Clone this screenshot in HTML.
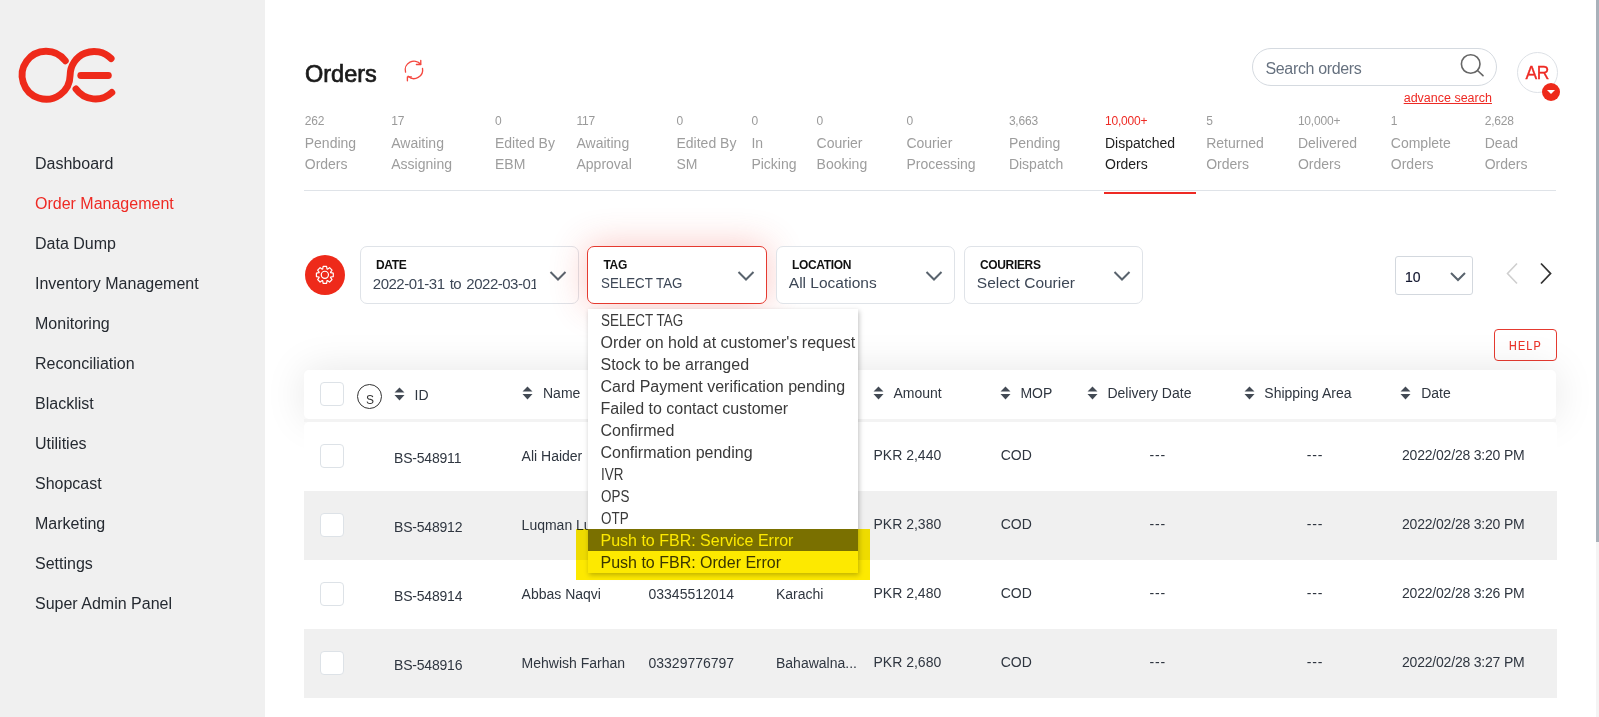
<!DOCTYPE html><html><head><meta charset="utf-8"><style>
html,body{margin:0;padding:0;width:1599px;height:717px;overflow:hidden;background:#fff;font-family:"Liberation Sans",sans-serif;}
.t{position:absolute;line-height:1;white-space:nowrap;}
.a{position:absolute;}
</style></head><body>
<div class="a" style="left:0;top:0;width:265px;height:717px;background:#f0f0f0"></div>
<svg class="a" style="left:0;top:0" width="140" height="120" viewBox="0 0 140 120">
<g fill="none" stroke="#ee2a1a" stroke-width="6.9" stroke-linecap="round">
<path d="M65.3 60.8 A24 24 0 1 0 70.1 75.5 A24 24 0 0 1 111.1 58.5"/>
<path d="M76 89 A24 24 0 0 0 111.8 92.5"/>
<path d="M80.8 75.5 H108.3"/>
</g></svg>
<div class="t " style="left:35px;top:156.46px;font-size:16px;color:#252a31;">Dashboard</div>
<div class="t " style="left:35px;top:196.46px;font-size:16px;color:#ee2a24;">Order Management</div>
<div class="t " style="left:35px;top:236.46px;font-size:16px;color:#252a31;">Data Dump</div>
<div class="t " style="left:35px;top:276.46px;font-size:16px;color:#252a31;">Inventory Management</div>
<div class="t " style="left:35px;top:316.46px;font-size:16px;color:#252a31;">Monitoring</div>
<div class="t " style="left:35px;top:356.46px;font-size:16px;color:#252a31;">Reconciliation</div>
<div class="t " style="left:35px;top:396.46px;font-size:16px;color:#252a31;">Blacklist</div>
<div class="t " style="left:35px;top:436.46px;font-size:16px;color:#252a31;">Utilities</div>
<div class="t " style="left:35px;top:476.46px;font-size:16px;color:#252a31;">Shopcast</div>
<div class="t " style="left:35px;top:516.46px;font-size:16px;color:#252a31;">Marketing</div>
<div class="t " style="left:35px;top:556.46px;font-size:16px;color:#252a31;">Settings</div>
<div class="t " style="left:35px;top:596.46px;font-size:16px;color:#252a31;">Super Admin Panel</div>
<div class="t " style="left:305px;top:63.11px;font-size:23.5px;color:#1a1a1a;-webkit-text-stroke:0.7px #1a1a1a;">Orders</div>
<svg class="a" style="left:398px;top:54px" width="32" height="32" viewBox="0 0 32 32">
<g fill="none" stroke="#f4473f" stroke-width="1.35" stroke-linecap="round" stroke-linejoin="round">
<path d="M7.55 18.1 A8.7 8.7 0 0 1 22.61 10.26"/><path d="M22.77 6.4 V10.49 H18.4"/>
<path d="M24.52 14.34 A8.7 8.7 0 0 1 10.13 22.32"/><path d="M9.4 26.7 V22.9 H13.4"/>
</g></svg>
<div class="a" style="left:1252px;top:48px;width:243px;height:36px;border:1px solid #d5dae0;border-radius:19px;"></div>
<div class="t " style="left:1265.5px;top:61.46px;font-size:16px;color:#66717f;letter-spacing:-0.35px;">Search orders</div>
<svg class="a" style="left:1458px;top:52px" width="28" height="27" viewBox="0 0 28 27">
<g fill="none" stroke="#666" stroke-width="1.6" stroke-linecap="round"><circle cx="12.7" cy="12" r="9.3"/><path d="M19.5 18.5 L25 23.6"/></g></svg>
<div class="t " style="left:1403.7px;top:92.12px;font-size:12.5px;color:#ee2a24;text-decoration:underline;">advance search</div>
<div class="a" style="left:1517px;top:52px;width:39px;height:39px;border:1px solid #dde1e6;border-radius:50%;"></div>
<div class="t " style="left:1525.5px;top:65.19px;font-size:17.5px;color:#ee2a24;letter-spacing:-0.3px;-webkit-text-stroke:0.3px #ee2a24;">AR</div>
<div class="a" style="left:1542px;top:83px;width:18px;height:18px;background:#ee2a1a;border-radius:50%;"></div>
<div class="a" style="left:1547px;top:90px;width:0;height:0;border-left:4px solid transparent;border-right:4px solid transparent;border-top:4px solid #fff;"></div>
<div class="t " style="left:304.75px;top:115.34px;font-size:12px;color:#9a9a9a;letter-spacing:-0.2px;">262</div>
<div class="t " style="left:304.75px;top:135.75px;font-size:14px;color:#9d9d9d;">Pending</div>
<div class="t " style="left:304.75px;top:156.85px;font-size:14px;color:#9d9d9d;">Orders</div>
<div class="t " style="left:391.25px;top:115.34px;font-size:12px;color:#9a9a9a;letter-spacing:-0.2px;">17</div>
<div class="t " style="left:391.25px;top:135.75px;font-size:14px;color:#9d9d9d;">Awaiting</div>
<div class="t " style="left:391.25px;top:156.85px;font-size:14px;color:#9d9d9d;">Assigning</div>
<div class="t " style="left:495px;top:115.34px;font-size:12px;color:#9a9a9a;letter-spacing:-0.2px;">0</div>
<div class="t " style="left:495px;top:135.75px;font-size:14px;color:#9d9d9d;">Edited By</div>
<div class="t " style="left:495px;top:156.85px;font-size:14px;color:#9d9d9d;">EBM</div>
<div class="t " style="left:576.5px;top:115.34px;font-size:12px;color:#9a9a9a;letter-spacing:-0.2px;">117</div>
<div class="t " style="left:576.5px;top:135.75px;font-size:14px;color:#9d9d9d;">Awaiting</div>
<div class="t " style="left:576.5px;top:156.85px;font-size:14px;color:#9d9d9d;">Approval</div>
<div class="t " style="left:676.5px;top:115.34px;font-size:12px;color:#9a9a9a;letter-spacing:-0.2px;">0</div>
<div class="t " style="left:676.5px;top:135.75px;font-size:14px;color:#9d9d9d;">Edited By</div>
<div class="t " style="left:676.5px;top:156.85px;font-size:14px;color:#9d9d9d;">SM</div>
<div class="t " style="left:751.4px;top:115.34px;font-size:12px;color:#9a9a9a;letter-spacing:-0.2px;">0</div>
<div class="t " style="left:751.4px;top:135.75px;font-size:14px;color:#9d9d9d;">In</div>
<div class="t " style="left:751.4px;top:156.85px;font-size:14px;color:#9d9d9d;">Picking</div>
<div class="t " style="left:816.6px;top:115.34px;font-size:12px;color:#9a9a9a;letter-spacing:-0.2px;">0</div>
<div class="t " style="left:816.6px;top:135.75px;font-size:14px;color:#9d9d9d;">Courier</div>
<div class="t " style="left:816.6px;top:156.85px;font-size:14px;color:#9d9d9d;">Booking</div>
<div class="t " style="left:906.4px;top:115.34px;font-size:12px;color:#9a9a9a;letter-spacing:-0.2px;">0</div>
<div class="t " style="left:906.4px;top:135.75px;font-size:14px;color:#9d9d9d;">Courier</div>
<div class="t " style="left:906.4px;top:156.85px;font-size:14px;color:#9d9d9d;">Processing</div>
<div class="t " style="left:1008.9px;top:115.34px;font-size:12px;color:#9a9a9a;letter-spacing:-0.2px;">3,663</div>
<div class="t " style="left:1008.9px;top:135.75px;font-size:14px;color:#9d9d9d;">Pending</div>
<div class="t " style="left:1008.9px;top:156.85px;font-size:14px;color:#9d9d9d;">Dispatch</div>
<div class="t " style="left:1105px;top:115.34px;font-size:12px;color:#ee2a24;letter-spacing:-0.2px;">10,000+</div>
<div class="t " style="left:1105px;top:135.75px;font-size:14px;color:#1f1f1f;">Dispatched</div>
<div class="t " style="left:1105px;top:156.85px;font-size:14px;color:#1f1f1f;">Orders</div>
<div class="t " style="left:1206.2px;top:115.34px;font-size:12px;color:#9a9a9a;letter-spacing:-0.2px;">5</div>
<div class="t " style="left:1206.2px;top:135.75px;font-size:14px;color:#9d9d9d;">Returned</div>
<div class="t " style="left:1206.2px;top:156.85px;font-size:14px;color:#9d9d9d;">Orders</div>
<div class="t " style="left:1297.9px;top:115.34px;font-size:12px;color:#9a9a9a;letter-spacing:-0.2px;">10,000+</div>
<div class="t " style="left:1297.9px;top:135.75px;font-size:14px;color:#9d9d9d;">Delivered</div>
<div class="t " style="left:1297.9px;top:156.85px;font-size:14px;color:#9d9d9d;">Orders</div>
<div class="t " style="left:1390.8px;top:115.34px;font-size:12px;color:#9a9a9a;letter-spacing:-0.2px;">1</div>
<div class="t " style="left:1390.8px;top:135.75px;font-size:14px;color:#9d9d9d;">Complete</div>
<div class="t " style="left:1390.8px;top:156.85px;font-size:14px;color:#9d9d9d;">Orders</div>
<div class="t " style="left:1484.7px;top:115.34px;font-size:12px;color:#9a9a9a;letter-spacing:-0.2px;">2,628</div>
<div class="t " style="left:1484.7px;top:135.75px;font-size:14px;color:#9d9d9d;">Dead</div>
<div class="t " style="left:1484.7px;top:156.85px;font-size:14px;color:#9d9d9d;">Orders</div>
<div class="a" style="left:304px;top:190px;width:1252px;height:1px;background:#dfe3e8"></div>
<div class="a" style="left:1104px;top:192.3px;width:92px;height:1.5px;background:#ee2a24"></div>
<div class="a" style="left:305px;top:255px;width:40px;height:40px;background:#ee2a1a;border-radius:50%;"></div>
<svg class="a" style="left:305px;top:255px" width="40" height="40" viewBox="0 0 40 40">
<g fill="none" stroke="#fff" stroke-width="1.2" stroke-linejoin="round"><path d="M25.65 17.67 L28.28 18.14 L28.28 21.56 L25.65 22.03 L25.50 22.41 L27.02 24.60 L24.60 27.02 L22.41 25.50 L22.03 25.65 L21.56 28.28 L18.14 28.28 L17.67 25.65 L17.29 25.50 L15.10 27.02 L12.68 24.60 L14.20 22.41 L14.05 22.03 L11.42 21.56 L11.42 18.14 L14.05 17.67 L14.20 17.29 L12.68 15.10 L15.10 12.68 L17.29 14.20 L17.67 14.05 L18.14 11.42 L21.56 11.42 L22.03 14.05 L22.41 14.20 L24.60 12.68 L27.02 15.10 L25.50 17.29Z"/><circle cx="19.85" cy="19.85" r="3.6"/></g></svg>
<div class="a" style="left:359.5px;top:246px;width:219px;height:58px;box-sizing:border-box;border:1px solid #dfe3e8;border-radius:7px;background:#fff;"></div>
<div class="t " style="left:376.0px;top:258.84px;font-size:12px;color:#111;font-weight:700;letter-spacing:-0.35px;">DATE</div>
<div class="t " style="left:372.8px;top:275.60px;font-size:15px;color:#3d4756;letter-spacing:-0.5px;overflow:hidden;width:163.5px;word-spacing:1.5px;">2022-01-31 to 2022-03-01</div>
<svg class="a" style="left:548.5px;top:270px" width="18" height="12" viewBox="0 0 18 12"><path d="M1.5 2 L9 9.5 L16.5 2" fill="none" stroke="#59636d" stroke-width="2"/></svg>
<div class="a" style="left:587px;top:246px;width:180px;height:58px;box-sizing:border-box;border:1.5px solid #e53a30;border-radius:7px;background:#fff;box-shadow:0 0 36px rgba(240,60,50,0.3);"></div>
<div class="t " style="left:603.5px;top:258.84px;font-size:12px;color:#111;font-weight:700;letter-spacing:-0.35px;">TAG</div>
<div class="t " style="left:600.8px;top:275.18px;font-size:15.5px;color:#3d4756;transform:scaleX(0.86);transform-origin:0 0;">SELECT TAG</div>
<svg class="a" style="left:737px;top:270px" width="18" height="12" viewBox="0 0 18 12"><path d="M1.5 2 L9 9.5 L16.5 2" fill="none" stroke="#59636d" stroke-width="2"/></svg>
<div class="a" style="left:775.5px;top:246px;width:179px;height:58px;box-sizing:border-box;border:1px solid #dfe3e8;border-radius:7px;background:#fff;"></div>
<div class="t " style="left:792.0px;top:258.84px;font-size:12px;color:#111;font-weight:700;letter-spacing:-0.35px;">LOCATION</div>
<div class="t " style="left:788.8px;top:275.18px;font-size:15.5px;color:#3d4756;">All Locations</div>
<svg class="a" style="left:924.5px;top:270px" width="18" height="12" viewBox="0 0 18 12"><path d="M1.5 2 L9 9.5 L16.5 2" fill="none" stroke="#59636d" stroke-width="2"/></svg>
<div class="a" style="left:963.5px;top:246px;width:179px;height:58px;box-sizing:border-box;border:1px solid #dfe3e8;border-radius:7px;background:#fff;"></div>
<div class="t " style="left:980.0px;top:258.84px;font-size:12px;color:#111;font-weight:700;letter-spacing:-0.35px;">COURIERS</div>
<div class="t " style="left:976.8px;top:275.18px;font-size:15.5px;color:#3d4756;">Select Courier</div>
<svg class="a" style="left:1112.5px;top:270px" width="18" height="12" viewBox="0 0 18 12"><path d="M1.5 2 L9 9.5 L16.5 2" fill="none" stroke="#59636d" stroke-width="2"/></svg>
<div class="a" style="left:1395px;top:256px;width:78px;height:39px;box-sizing:border-box;border:1px solid #d3d8de;border-radius:3px;"></div>
<div class="t " style="left:1405px;top:270.15px;font-size:14px;color:#141830;-webkit-text-stroke:0.2px #141830;">10</div>
<svg class="a" style="left:1449px;top:270px" width="18" height="13" viewBox="0 0 18 13"><path d="M2 3 L9 10 L16 3" fill="none" stroke="#59636d" stroke-width="2"/></svg>
<svg class="a" style="left:1500px;top:260px" width="60" height="27" viewBox="0 0 60 27"><path d="M17 3.5 L7.5 13.5 L17 23.5" fill="none" stroke="#cfcfcf" stroke-width="1.6"/><path d="M41 3.5 L50.5 13.5 L41 23.5" fill="none" stroke="#333" stroke-width="1.8"/></svg>
<div class="a" style="left:1494px;top:329px;width:63px;height:32px;box-sizing:border-box;border:1.5px solid #e53a30;border-radius:4px;"></div>
<div class="t " style="left:1508.8px;top:339.84px;font-size:12px;color:#ec3228;letter-spacing:1.3px;-webkit-text-stroke:0.15px #e53a30;transform:scaleX(0.9);transform-origin:0 0;">HELP</div>
<div class="a" style="left:304px;top:370px;width:1252px;height:49px;background:#fff;border-radius:5px;box-shadow:0 0 40px rgba(0,0,0,0.1);"></div>
<div class="a" style="left:304px;top:419px;width:1252px;height:3px;background:#f3f3f3;"></div>
<div class="a" style="left:304px;top:422px;width:1253px;height:69px;background:#fff;border-radius:5px 5px 0 0;"></div>
<div class="a" style="left:304px;top:491px;width:1253px;height:69px;background:#f0f0f0;"></div>
<div class="a" style="left:304px;top:560px;width:1253px;height:69px;background:#fff;"></div>
<div class="a" style="left:304px;top:629px;width:1253px;height:69px;background:#f0f0f0;"></div>
<div class="a" style="left:320px;top:382.3px;width:24px;height:24px;box-sizing:border-box;border:1px solid #dde2e7;border-radius:4px;background:#fff;"></div>
<div class="a" style="left:357px;top:384px;width:25px;height:25px;box-sizing:border-box;border:1.3px solid #333;border-radius:50%;"></div>
<div class="t " style="left:366px;top:393.84px;font-size:12px;color:#333;">S</div>
<svg class="a" style="left:393.6px;top:387.3px" width="11" height="14" viewBox="0 0 11 14"><path d="M5.5 0.5 L10.5 5.5 H0.5Z M5.5 13.5 L10.5 8 H0.5Z" fill="#434a54"/></svg>
<div class="t " style="left:414.5px;top:388.35px;font-size:14px;color:#2f3640;">ID</div>
<svg class="a" style="left:521.6px;top:386.2px" width="11" height="14" viewBox="0 0 11 14"><path d="M5.5 0.5 L10.5 5.5 H0.5Z M5.5 13.5 L10.5 8 H0.5Z" fill="#434a54"/></svg>
<div class="t " style="left:543px;top:386.45px;font-size:14px;color:#2f3640;">Name</div>
<svg class="a" style="left:872.9px;top:386.2px" width="11" height="14" viewBox="0 0 11 14"><path d="M5.5 0.5 L10.5 5.5 H0.5Z M5.5 13.5 L10.5 8 H0.5Z" fill="#434a54"/></svg>
<div class="t " style="left:893.5px;top:386.45px;font-size:14px;color:#2f3640;">Amount</div>
<svg class="a" style="left:1000px;top:386.2px" width="11" height="14" viewBox="0 0 11 14"><path d="M5.5 0.5 L10.5 5.5 H0.5Z M5.5 13.5 L10.5 8 H0.5Z" fill="#434a54"/></svg>
<div class="t " style="left:1020.4px;top:386.45px;font-size:14px;color:#2f3640;">MOP</div>
<svg class="a" style="left:1086.8px;top:386.2px" width="11" height="14" viewBox="0 0 11 14"><path d="M5.5 0.5 L10.5 5.5 H0.5Z M5.5 13.5 L10.5 8 H0.5Z" fill="#434a54"/></svg>
<div class="t " style="left:1107.4px;top:386.45px;font-size:14px;color:#2f3640;">Delivery Date</div>
<svg class="a" style="left:1243.8px;top:386.2px" width="11" height="14" viewBox="0 0 11 14"><path d="M5.5 0.5 L10.5 5.5 H0.5Z M5.5 13.5 L10.5 8 H0.5Z" fill="#434a54"/></svg>
<div class="t " style="left:1264.3px;top:386.45px;font-size:14px;color:#2f3640;">Shipping Area</div>
<svg class="a" style="left:1400.4px;top:386.2px" width="11" height="14" viewBox="0 0 11 14"><path d="M5.5 0.5 L10.5 5.5 H0.5Z M5.5 13.5 L10.5 8 H0.5Z" fill="#434a54"/></svg>
<div class="t " style="left:1421.2px;top:386.45px;font-size:14px;color:#2f3640;">Date</div>
<div class="a" style="left:319.5px;top:444px;width:24px;height:24px;box-sizing:border-box;border:1px solid #dde2e7;border-radius:4px;background:#fff;"></div>
<div class="t " style="left:394px;top:451.15px;font-size:14px;color:#2f3640;letter-spacing:-0.2px;">BS-548911</div>
<div class="t " style="left:521.6px;top:449.15px;font-size:14px;color:#2f3640;">Ali Haider</div>
<div class="t " style="left:873.5px;top:448.15px;font-size:14px;color:#2f3640;">PKR 2,440</div>
<div class="t " style="left:1000.7px;top:448.15px;font-size:14px;color:#2f3640;">COD</div>
<div class="t " style="left:1149.6px;top:447.65px;font-size:14px;color:#2f3640;letter-spacing:0.8px;">---</div>
<div class="t " style="left:1306.8px;top:447.65px;font-size:14px;color:#2f3640;letter-spacing:0.8px;">---</div>
<div class="t " style="left:1402px;top:448.15px;font-size:14px;color:#2f3640;letter-spacing:-0.2px;">2022/02/28 3:20 PM</div>
<div class="a" style="left:319.5px;top:513px;width:24px;height:24px;box-sizing:border-box;border:1px solid #dde2e7;border-radius:4px;background:#fff;"></div>
<div class="t " style="left:394px;top:520.15px;font-size:14px;color:#2f3640;letter-spacing:-0.2px;">BS-548912</div>
<div class="t " style="left:521.6px;top:518.15px;font-size:14px;color:#2f3640;">Luqman Lu</div>
<div class="t " style="left:873.5px;top:517.15px;font-size:14px;color:#2f3640;">PKR 2,380</div>
<div class="t " style="left:1000.7px;top:517.15px;font-size:14px;color:#2f3640;">COD</div>
<div class="t " style="left:1149.6px;top:516.65px;font-size:14px;color:#2f3640;letter-spacing:0.8px;">---</div>
<div class="t " style="left:1306.8px;top:516.65px;font-size:14px;color:#2f3640;letter-spacing:0.8px;">---</div>
<div class="t " style="left:1402px;top:517.15px;font-size:14px;color:#2f3640;letter-spacing:-0.2px;">2022/02/28 3:20 PM</div>
<div class="a" style="left:319.5px;top:582px;width:24px;height:24px;box-sizing:border-box;border:1px solid #dde2e7;border-radius:4px;background:#fff;"></div>
<div class="t " style="left:394px;top:589.15px;font-size:14px;color:#2f3640;letter-spacing:-0.2px;">BS-548914</div>
<div class="t " style="left:521.6px;top:587.15px;font-size:14px;color:#2f3640;">Abbas Naqvi</div>
<div class="t " style="left:648.5px;top:587.15px;font-size:14px;color:#2f3640;">03345512014</div>
<div class="t " style="left:776px;top:587.15px;font-size:14px;color:#2f3640;">Karachi</div>
<div class="t " style="left:873.5px;top:586.15px;font-size:14px;color:#2f3640;">PKR 2,480</div>
<div class="t " style="left:1000.7px;top:586.15px;font-size:14px;color:#2f3640;">COD</div>
<div class="t " style="left:1149.6px;top:585.65px;font-size:14px;color:#2f3640;letter-spacing:0.8px;">---</div>
<div class="t " style="left:1306.8px;top:585.65px;font-size:14px;color:#2f3640;letter-spacing:0.8px;">---</div>
<div class="t " style="left:1402px;top:586.15px;font-size:14px;color:#2f3640;letter-spacing:-0.2px;">2022/02/28 3:26 PM</div>
<div class="a" style="left:319.5px;top:651px;width:24px;height:24px;box-sizing:border-box;border:1px solid #dde2e7;border-radius:4px;background:#fff;"></div>
<div class="t " style="left:394px;top:658.15px;font-size:14px;color:#2f3640;letter-spacing:-0.2px;">BS-548916</div>
<div class="t " style="left:521.6px;top:656.15px;font-size:14px;color:#2f3640;">Mehwish Farhan</div>
<div class="t " style="left:648.5px;top:656.15px;font-size:14px;color:#2f3640;">03329776797</div>
<div class="t " style="left:776px;top:656.15px;font-size:14px;color:#2f3640;">Bahawalna...</div>
<div class="t " style="left:873.5px;top:655.15px;font-size:14px;color:#2f3640;">PKR 2,680</div>
<div class="t " style="left:1000.7px;top:655.15px;font-size:14px;color:#2f3640;">COD</div>
<div class="t " style="left:1149.6px;top:654.65px;font-size:14px;color:#2f3640;letter-spacing:0.8px;">---</div>
<div class="t " style="left:1306.8px;top:654.65px;font-size:14px;color:#2f3640;letter-spacing:0.8px;">---</div>
<div class="t " style="left:1402px;top:655.15px;font-size:14px;color:#2f3640;letter-spacing:-0.2px;">2022/02/28 3:27 PM</div>
<div class="a" style="left:588px;top:309px;width:270px;height:264px;background:#fff;box-shadow:1px 2px 5px rgba(0,0,0,0.25);"></div>
<div class="a" style="left:588px;top:529px;width:270px;height:22px;background:#7b7b7b;"></div>
<div class="t " style="left:600.5px;top:312.96px;font-size:16px;color:#3a3a3a;transform:scaleX(0.84);transform-origin:0 0;">SELECT TAG</div>
<div class="t " style="left:600.5px;top:334.96px;font-size:16px;color:#3a3a3a;">Order on hold at customer's request</div>
<div class="t " style="left:600.5px;top:356.96px;font-size:16px;color:#3a3a3a;">Stock to be arranged</div>
<div class="t " style="left:600.5px;top:378.96px;font-size:16px;color:#3a3a3a;">Card Payment verification pending</div>
<div class="t " style="left:600.5px;top:400.96px;font-size:16px;color:#3a3a3a;">Failed to contact customer</div>
<div class="t " style="left:600.5px;top:422.96px;font-size:16px;color:#3a3a3a;">Confirmed</div>
<div class="t " style="left:600.5px;top:444.96px;font-size:16px;color:#3a3a3a;">Confirmation pending</div>
<div class="t " style="left:600.5px;top:466.96px;font-size:16px;color:#3a3a3a;transform:scaleX(0.84);transform-origin:0 0;">IVR</div>
<div class="t " style="left:600.5px;top:488.96px;font-size:16px;color:#3a3a3a;transform:scaleX(0.84);transform-origin:0 0;">OPS</div>
<div class="t " style="left:600.5px;top:510.96px;font-size:16px;color:#3a3a3a;transform:scaleX(0.84);transform-origin:0 0;">OTP</div>
<div class="t " style="left:600.5px;top:532.96px;font-size:16px;color:#fff;">Push to FBR: Service Error</div>
<div class="t " style="left:600.5px;top:554.96px;font-size:16px;color:#3a3a3a;">Push to FBR: Order Error</div>
<div class="a" style="left:576px;top:529px;width:294px;height:51px;background:#fde900;mix-blend-mode:multiply;"></div>
<div class="a" style="left:1596px;top:0;width:3px;height:717px;background:#f4f4f4;"></div>
<div class="a" style="left:1596px;top:0;width:3px;height:542px;background:#a9b1ba;"></div>
</body></html>
